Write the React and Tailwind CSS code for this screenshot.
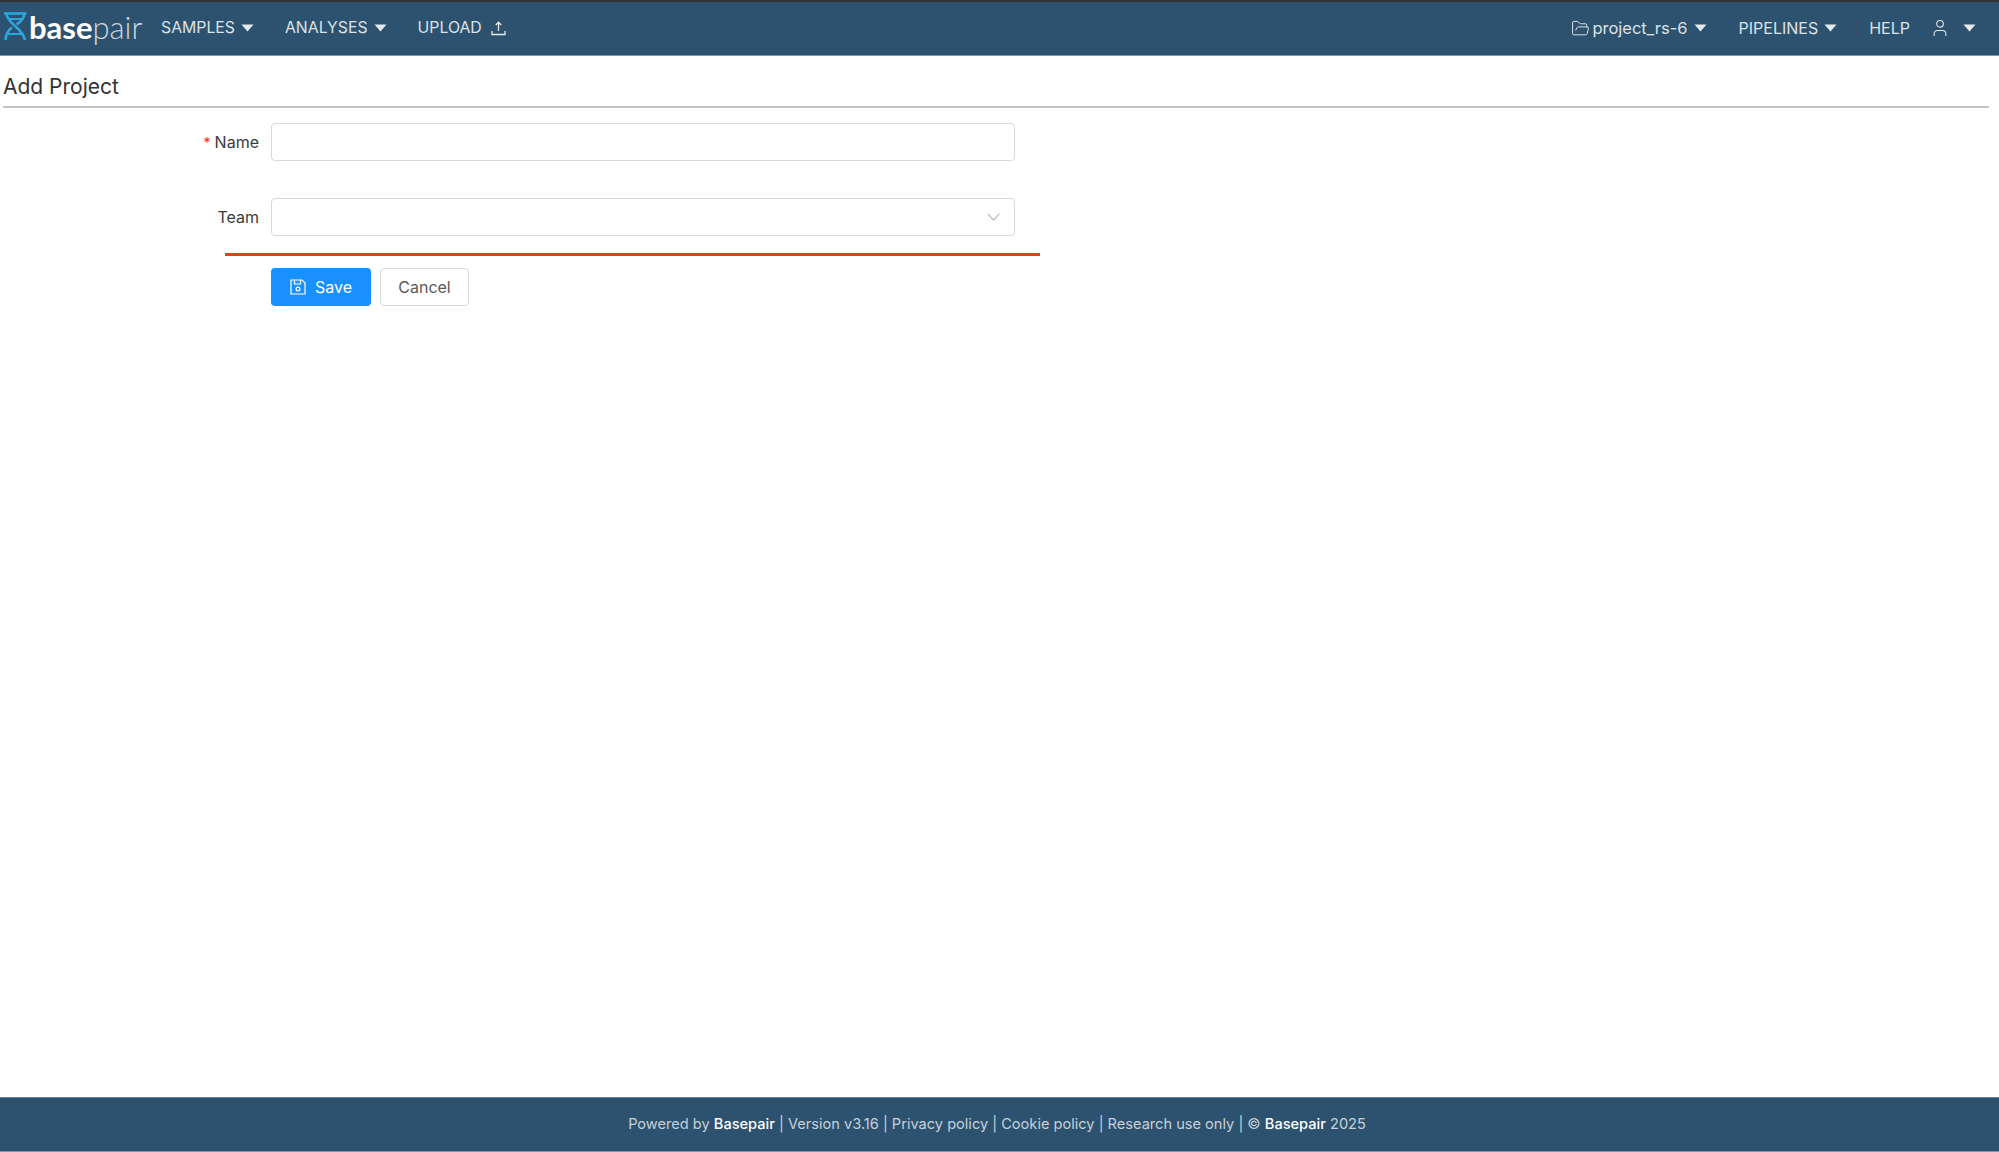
import { FolderOpen, User } from 'lucide-react'

function Caret() {
  return (
    <svg width="13" height="8" viewBox="0 0 13 8" className="ml-[6px]">
      <path d="M0.5 0.5 H12.5 L6.5 7.5 Z" fill="#e4e9ed" />
    </svg>
  )
}

function NavItem({ children }) {
  return <div className="flex items-center text-[16px] leading-[20px] text-[#dbe2e8] -mt-[1px]">{children}</div>
}

function MainLink({ children }) {
  return <div className="flex items-center text-[15.8px] leading-[20px] text-[#dbe2e8] -mt-[1px]">{children}</div>
}

function App() {
  return (
    <div className="h-[1152px] flex flex-col bg-white font-['Inter',sans-serif] overflow-hidden">
      {/* Top bar */}
      <header className="h-[56px] shrink-0 border-t-2 border-t-[#333333] border-b border-b-[#7b97ae] bg-[#2d526f] flex items-center justify-between">
        <div className="flex items-center">
          <div className="flex items-center pl-[3px] w-[161px]">
            <svg width="25" height="30" viewBox="0 0 25 30" fill="none" stroke="#2ba6dc" strokeWidth="2.6" className="-mt-[5px]">
              <path d="M1 2.5 H23.5" />
              <path d="M3.5 3 C4.5 13 20 17 22 29" />
              <path d="M21.5 3 C20.5 9 16.5 11.5 13.5 13.5" />
              <path d="M9 16.5 C5 19 3 24 2.5 29" />
              <path d="M7 8 H18" strokeWidth="2" />
              <path d="M4.5 23 H20.5" strokeWidth="2" />
            </svg>
            <span className="font-['Lato',sans-serif] text-[31px] leading-none font-bold text-white ml-[1px] -mt-[2px]">base</span>
            <span className="font-['Lato',sans-serif] text-[31px] leading-none font-light text-[#cdd6de] -mt-[2px]">pair</span>
          </div>
          <div className="flex items-center gap-[31px]">
            <MainLink>SAMPLES<Caret /></MainLink>
            <MainLink>ANALYSES<Caret /></MainLink>
            <MainLink>
              UPLOAD
              <svg width="15" height="15" viewBox="0 0 15 15" fill="none" stroke="#e4e9ed" strokeWidth="1.3" className="ml-[9px]">
                <path d="M7.5 10 V1.5 M4.8 4 L7.5 1.2 L10.2 4" />
                <path d="M1 10 V13.5 H14 V10" />
              </svg>
            </MainLink>
          </div>
        </div>
        <div className="flex items-center gap-[32px] pr-[23px]">
          <NavItem>
            <FolderOpen size={19} strokeWidth={1.2} className="mr-[2px] text-[#e4e9ed]" />
            <span className="text-[16.5px]">project_rs-6</span>
            <Caret />
          </NavItem>
          <NavItem>PIPELINES<Caret /></NavItem>
          <div className="flex items-center gap-[20px]">
            <NavItem>HELP</NavItem>
            <div className="flex items-center gap-[7px] -mt-[1px]">
              <User size={20} strokeWidth={1.3} className="text-[#e4e9ed]" />
              <Caret />
            </div>
          </div>
        </div>
      </header>

      {/* Page content */}
      <main className="flex-1 pl-[3px] pr-[10px]">
        <h1 className="h-[52px] pt-[13px] text-[21px] leading-[36px] text-[#333333] border-b-2 border-b-[#c4c4c4]">
          Add Project
        </h1>

        <form className="mt-[15px] w-[1037px]">
          <div className="flex items-center h-[38px]">
            <label className="w-[268px] pr-[12px] text-right text-[16px] text-[#3b3b3b]">
              <span className="text-[#f5222d] mr-[4px] text-[14px]">*</span>Name
            </label>
            <input className="w-[744px] h-[38px] rounded-[4px] border border-[#d9d9d9] bg-white" />
          </div>

          <div className="flex items-center h-[38px] mt-[37px]">
            <label className="w-[268px] pr-[12px] text-right text-[16px] text-[#3b3b3b]">Team</label>
            <div className="w-[744px] h-[38px] rounded-[4px] border border-[#d9d9d9] bg-white flex items-center justify-end pr-[14px]">
              <svg width="13" height="8" viewBox="0 0 13 8" fill="none" stroke="#bfbfbf" strokeWidth="1.3">
                <path d="M0.7 0.7 L6.5 7 L12.3 0.7" />
              </svg>
            </div>
          </div>

          <div className="ml-[222px] mt-[17px] h-[3px] bg-[#f5371c]" />

          <div className="flex items-center gap-[9px] ml-[268px] mt-[12px]">
            <button type="button" className="w-[100px] h-[38px] rounded-[4px] bg-[#1890ff] text-white text-[16px] flex items-center justify-center gap-[9px]">
              <svg width="16" height="16" viewBox="0 0 16 16" fill="none" stroke="white" strokeWidth="1.2" className="-mt-[1px]">
                <path d="M1 1 H12 L15 4 V15 H1 Z" />
                <path d="M4.5 1 V5 H10.5 V1" />
                <circle cx="8" cy="10" r="1.9" />
              </svg>
              Save
            </button>
            <button type="button" className="w-[89px] h-[38px] rounded-[4px] border border-[#d9d9d9] bg-white text-[#595959] text-[16px]">
              Cancel
            </button>
          </div>
        </form>
      </main>

      {/* Footer */}
      <footer className="h-[55px] shrink-0 border-t border-t-[#5f7f99] border-b border-b-[#7b97ae] bg-[#2d526f] flex items-center justify-center pr-[5px] text-[14.6px] text-[#c5d0d9]">
        <span>
          Powered by <b className="font-medium text-white">Basepair</b> | Version v3.16 | Privacy policy | Cookie policy | Research use only | © <b className="font-medium text-white">Basepair</b> 2025
        </span>
      </footer>
    </div>
  )
}

export default App
